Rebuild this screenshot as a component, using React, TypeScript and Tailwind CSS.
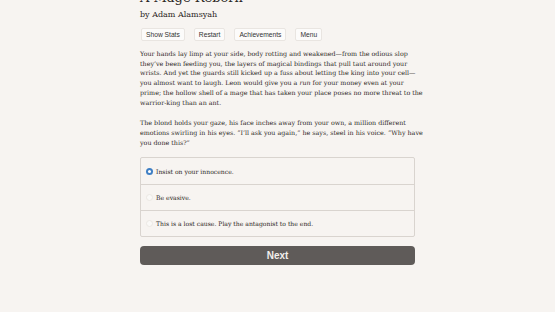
import { useState } from "react";

const choices = [
  "Insist on your innocence.",
  "Be evasive.",
  "This is a lost cause. Play the antagonist to the end.",
];

export default function App() {
  const [picked, setPicked] = useState(0);

  return (
    <div className="h-[312px] w-[555px] overflow-hidden bg-[#f7f4f1] text-[#2b2624] antialiased">
      <div className="mx-auto -mt-[10px] w-[275px]">
        <h1 className="text-[13px] leading-[16px] font-['DejaVu_Serif',serif]">A Mage Reborn</h1>
        <div className="mt-[3px] text-[8px] leading-[12px] font-['DejaVu_Serif',serif]">
          by Adam Alamsyah
        </div>

        <div className="mt-[7px] flex gap-[9px] pl-[1px] font-['Liberation_Sans',sans-serif] text-[6.7px]">
          {["Show Stats", "Restart", "Achievements", "Menu"].map((b) => (
            <button
              key={b}
              className="h-[13px] rounded-[2px] border border-[#e9e5e1] bg-[#fcfbfa] px-[4px] leading-[11px] text-[#333]"
            >
              {b}
            </button>
          ))}
        </div>

        <div className="mt-[8px] whitespace-nowrap text-[6.35px] leading-[9.7px] font-['DejaVu_Serif',serif] text-[#2e2926]">
          <p>
            Your hands lay limp at your side, body rotting and weakened—from the odious slop
            <br />
            they’ve been feeding you, the layers of magical bindings that pull taut around your
            <br />
            wrists. And yet the guards still kicked up a fuss about letting the king into your cell—
            <br />
            you almost want to laugh. Leon would give you a <i>run</i> for your money even at your
            <br />
            prime; the hollow shell of a mage that has taken your place poses no more threat to the
            <br />
            warrior-king than an ant.
          </p>
          <p className="mt-[11px]">
            The blond holds your gaze, his face inches away from your own, a million different
            <br />
            emotions swirling in his eyes. “I’ll ask you again,” he says, steel in his voice. “Why have
            <br />
            you done this?”
          </p>
        </div>

        <div className="mt-[10px] overflow-hidden rounded-[2px] border border-[#d9d4cf] font-['DejaVu_Serif',serif] text-[6.1px] text-[#2e2926]">
          {choices.map((c, i) => (
            <label
              key={c}
              onClick={() => setPicked(i)}
              className={
                "flex h-[26px] items-center gap-[3px] px-[5px] " +
                (i > 0 ? "border-t border-[#d9d4cf]" : "")
              }
            >
              <span
                className={
                  "flex h-[7px] w-[7px] items-center justify-center rounded-full " +
                  (picked === i ? "bg-[#3f7fc4]" : "border border-[#ebe8e4] bg-[#faf9f7]")
                }
              >
                {picked === i && <span className="h-[3px] w-[3px] rounded-full bg-white" />}
              </span>
              <span>{c}</span>
            </label>
          ))}
        </div>

        <button className="mt-[9px] flex h-[19px] w-full items-center justify-center rounded-[4px] bg-[#5f5b59] font-['Liberation_Sans',sans-serif] text-[10px] font-bold text-[#f2efec]">
          Next
        </button>
      </div>
    </div>
  );
}
